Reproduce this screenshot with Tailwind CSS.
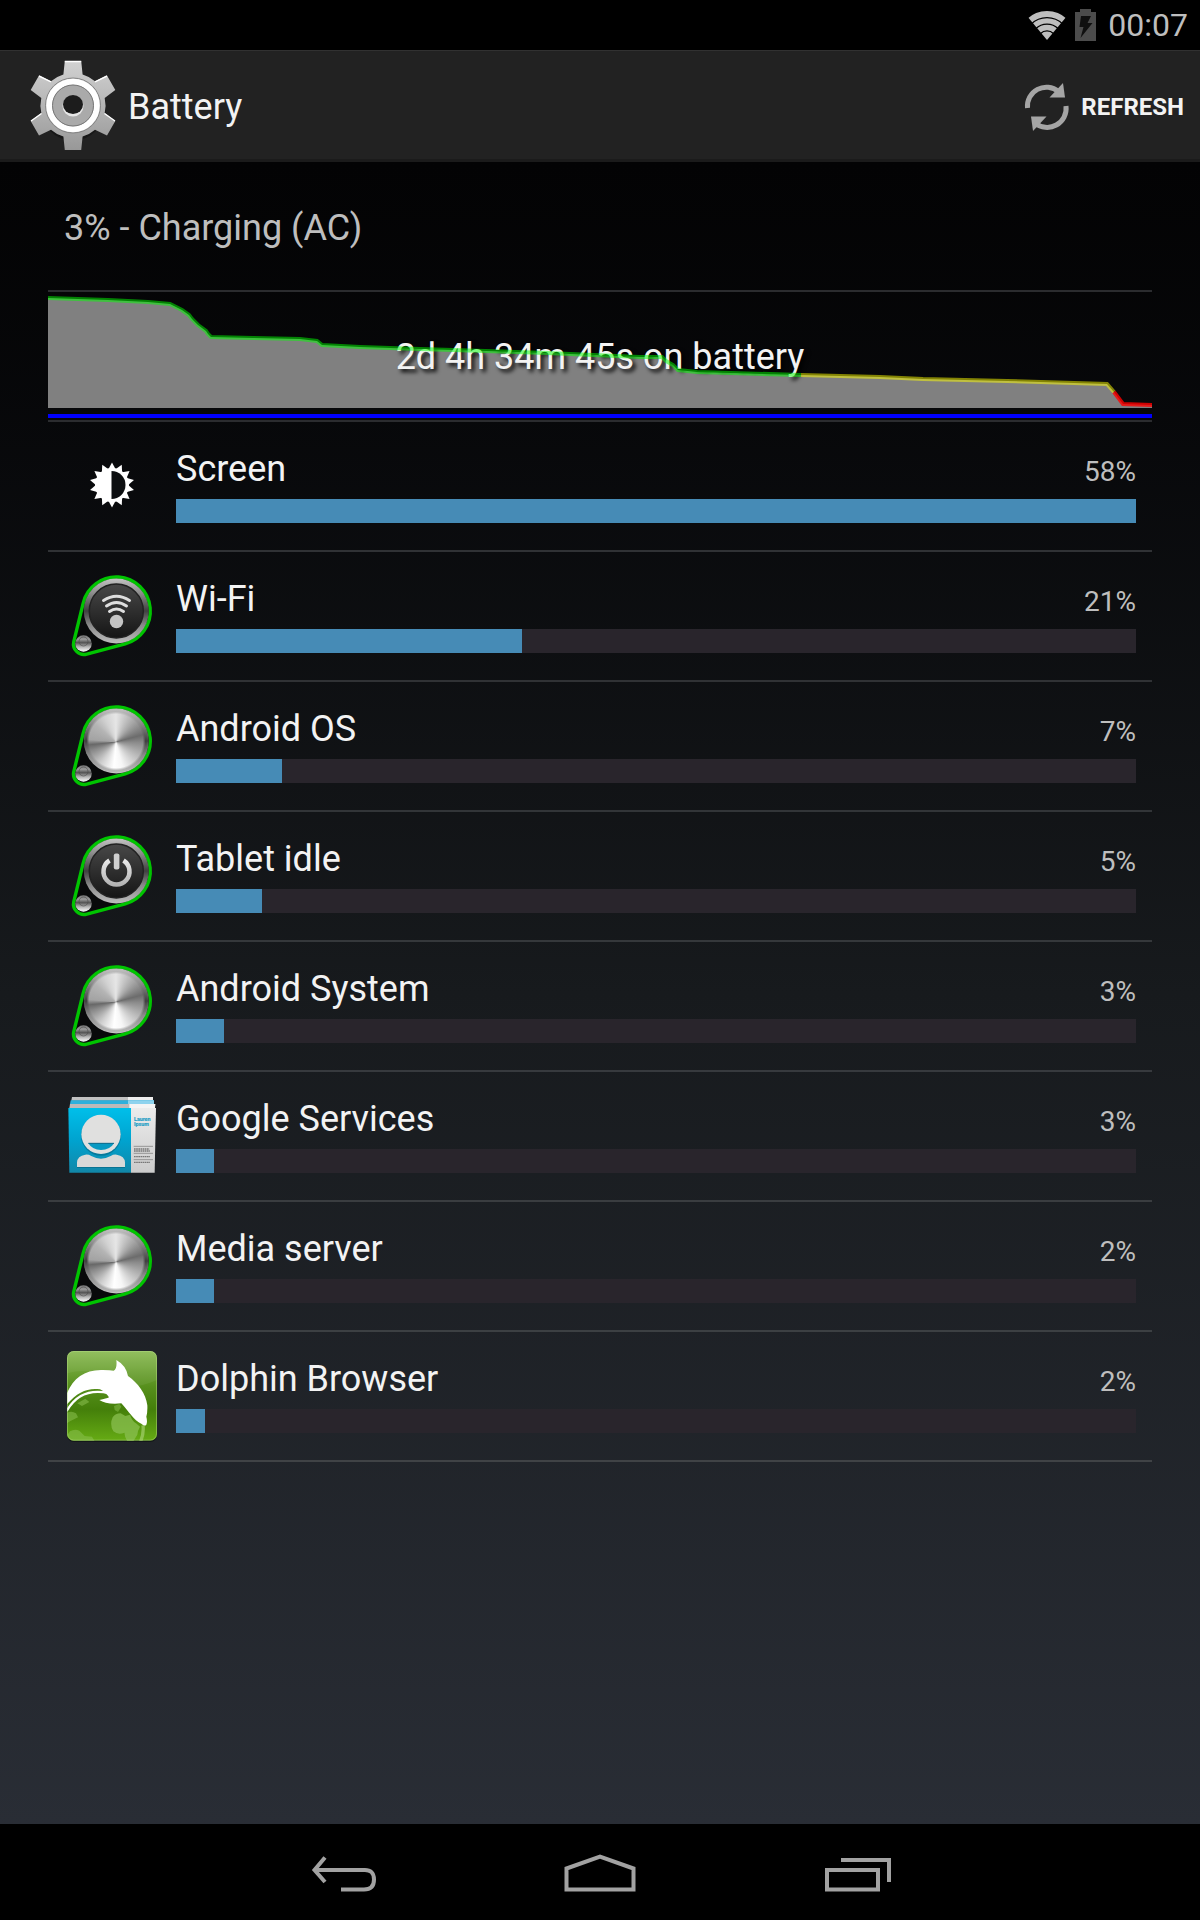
<!DOCTYPE html>
<html lang="en">
<head>
<meta charset="utf-8">
<meta name="viewport" content="width=device-width, initial-scale=1">
<title>Battery</title>
<script src="https://cdn.jsdelivr.net/npm/@tailwindcss/browser@4"></script>
</head>
<body class="flex min-h-screen flex-col bg-black font-[Roboto,sans-serif] text-[#f3f3f3]">

<!-- Shared icon parts -->
<svg class="absolute size-0" aria-hidden="true">
  <defs>
    <linearGradient id="rim" x1="0" y1="0" x2="0" y2="1">
      <stop offset="0" stop-color="#c4c4c4"/><stop offset=".22" stop-color="#8e8e8e"/><stop offset=".5" stop-color="#404040"/><stop offset=".72" stop-color="#8a8a8a"/><stop offset="1" stop-color="#bdbdbd"/>
    </linearGradient>
    <linearGradient id="face" x1="0" y1="0" x2="0" y2="1">
      <stop offset="0" stop-color="#484848"/><stop offset="1" stop-color="#151515"/>
    </linearGradient>
    <linearGradient id="ball" x1="0" y1="0" x2="0" y2="1">
      <stop offset="0" stop-color="#777"/><stop offset=".25" stop-color="#999"/><stop offset=".45" stop-color="#555"/><stop offset=".7" stop-color="#b5b5b5"/><stop offset="1" stop-color="#fff"/>
    </linearGradient>
    <linearGradient id="glyph" x1="0" y1="0" x2="0" y2="1">
      <stop offset="0" stop-color="#e8e8e8"/><stop offset="1" stop-color="#b4b4b4"/>
    </linearGradient>
    <linearGradient id="gearFill" x1="0" y1="0" x2="0" y2="1">
      <stop offset="0" stop-color="#d2d2d2"/><stop offset="1" stop-color="#989898"/>
    </linearGradient>
    <linearGradient id="card" x1="0" y1="0" x2="0" y2="1">
      <stop offset="0" stop-color="#00bfea"/><stop offset=".5" stop-color="#00a3cf"/><stop offset="1" stop-color="#1287a8"/>
    </linearGradient>
    <linearGradient id="paper" x1="0" y1="0" x2="0" y2="1">
      <stop offset="0" stop-color="#ececec"/><stop offset="1" stop-color="#cbcbcb"/>
    </linearGradient>
    <linearGradient id="leaf" x1="0" y1="0" x2="0" y2="1">
      <stop offset="0" stop-color="#8cbb55"/><stop offset=".4" stop-color="#568f1c"/><stop offset=".65" stop-color="#447f0a"/><stop offset="1" stop-color="#66ab14"/>
    </linearGradient>
    <symbol id="pod" viewBox="0 0 96 96">
      <path d="M19.200 35.100A34 34 0 1 1 61.200 75.800L22.800 86.100A10.500 10.500 0 0 1 9.800 73.600Z" fill="#08090a" stroke="#00c400" stroke-width="3.400"/>
      <circle cx="52.300" cy="43" r="32.500" fill="url(#rim)"/>
      <circle cx="19.500" cy="75.500" r="8.300" fill="url(#ball)"/>
      <circle cx="19.500" cy="73.500" r="4.500" fill="none" stroke="#4a4a4a" stroke-opacity=".6"/>
    </symbol>
  </defs>
</svg>

<header>
  <div class="flex h-[50px] items-center justify-end bg-black pr-3 text-[#bebebe]">
    <svg class="mr-2 h-8 w-10" viewBox="0 0 40 32" aria-label="Wi-Fi signal" role="img">
      <defs><clipPath id="fan"><path d="M20 31L0 7V0H40V7Z"/></clipPath></defs>
      <g clip-path="url(#fan)" fill="none" stroke="#bebebe">
        <circle cx="20" cy="31" r="26" stroke-width="6"/>
        <circle cx="20" cy="31" r="19.200" stroke-width="5.200"/>
        <circle cx="20" cy="31" r="12.500" stroke-width="5.500"/>
        <circle cx="20" cy="31" r="4.200" stroke-width="8.400"/>
      </g>
    </svg>
    <svg class="mr-3 h-8 w-[21px]" viewBox="0 0 21 32" aria-label="Charging" role="img">
      <path d="M5 0H16V3H21V32H0V3H5Z" fill="#4c4c4c"/>
      <path d="M6 7H16L12.500 14H17.500L5.500 29L8.500 18H4.500Z" fill="#101010"/>
    </svg>
    <time class="text-[32px] leading-9">00:07</time>
  </div>
  <div class="flex h-28 items-center border-t border-b-3 border-t-[#313131] border-b-[#1b1b1b] bg-[#222] pt-1 pr-4 pl-6">
    <svg class="mr-2 size-24" viewBox="0 1 96 96" aria-hidden="true">
      <circle cx="49" cy="49.500" r="33" fill="#0b0b0b" opacity=".45"/>
      <path d="M40.800 3H57.200L58.600 16.500A32.500 32.500 0 0 1 71 23.300L83 17.500L91.300 32L80.700 40A32.500 32.500 0 0 1 80.700 55L91.300 63L83 77.500L71 71.700A32.500 32.500 0 0 1 58.600 78.500L57.200 92H40.800L39.400 78.500A32.500 32.500 0 0 1 27 71.700L15 77.500L6.700 63L17.300 55A32.500 32.500 0 0 1 17.300 40L6.700 32L15 17.500L27 23.300A32.500 32.500 0 0 1 39.400 16.500Z" fill="url(#gearFill)"/>
      <path d="M40.800 3.500H57.200M15 18L27 23.800M83 18L71 23.800M7 63L17.500 55.500M91 63L80.500 55.500" fill="none" stroke="#fff" stroke-width="1.400"/>
      <circle cx="49" cy="47.500" r="27.500" fill="none" stroke="#858585" stroke-width="1"/>
      <circle cx="49" cy="47.500" r="23.800" fill="#aaa" stroke="#fff" stroke-width="6"/>
      <circle cx="49" cy="47.500" r="20.500" fill="none" stroke="#777" stroke-width="1"/>
      <circle cx="49" cy="48" r="10.500" fill="#e6e6e6"/>
      <ellipse cx="49" cy="46.500" rx="10" ry="9.500" fill="#1c1c1c"/>
    </svg>
    <h1 class="text-4xl leading-10">Battery</h1>
    <button type="button" class="ml-auto flex items-center gap-2.5 text-2xl font-bold uppercase">
      <svg class="h-12 w-12" viewBox="0 0 48 48" fill="none" aria-hidden="true">
        <g stroke="#a5a5a5" stroke-width="5">
          <path d="M4.500 25A19 19 0 0 1 35.500 8.500"/>
          <path d="M43 23A19 19 0 0 1 12 40"/>
        </g>
        <path d="M40 0L42 14.500H26.500Z" fill="#a5a5a5"/>
        <path d="M10 48L8 33.500H23.500Z" fill="#a5a5a5"/>
      </svg>
      <span>Refresh</span>
    </button>
  </div>
</header>

<main class="flex-1 bg-linear-to-b from-[#030304] via-[#171a1d] via-50% to-[#292d35] px-12">
  <p class="flex h-32 items-center px-4 pt-1 text-4xl leading-10 text-[#bebebe]">3% - Charging (AC)</p>

  <section class="grid h-[130px] items-center border-t-2 border-[#2b2c2f]" aria-label="Battery history">
    <svg class="col-start-1 row-start-1 h-32 w-full" viewBox="0 0 1104 128" preserveAspectRatio="none" aria-hidden="true">
      <path fill="#808080" d="M0 6L60 8L100 10L122 12L134 18L141 23L144 27L150 33L158 39L160 42L163 45L205 46L252 47L269 49L274 53L312 55L372 57L499 61L592 65L614 65L618 69L625 73L630 78L649 80L753 83L832 85L875 87L959 89L1059 92L1066 100L1075 112L1104 113V116H0Z"/>
      <path fill="#00f" d="M0 122H1104V126H0Z"/>
    </svg>
    <p class="col-start-1 row-start-1 pt-0.5 text-center text-4xl leading-10 [text-shadow:3px_3px_4px_#000]">2d 4h 34m 45s on battery</p>
    <svg class="relative col-start-1 row-start-1 h-32 w-full" viewBox="0 0 1104 128" preserveAspectRatio="none" fill="none" stroke-width="4" aria-hidden="true">
      <path stroke="#00ff00" stroke-opacity=".5" d="M0 6L60 8L100 10L122 12L134 18L141 23L144 27L150 33L158 39L160 42L163 45L205 46L252 47L269 49L274 53L312 55L372 57L499 61L592 65L614 65L618 69L625 73L630 78L649 80L753 83"/>
      <path stroke="#ffff00" stroke-opacity=".5" d="M753 83L832 85L875 87L959 89L1059 92L1066 100"/>
      <path stroke="#ff0000" stroke-opacity=".8" d="M1066 100L1075 112L1104 113"/>
    </svg>
  </section>

  <ul class="border-t-2 border-[#2b2c2f]">
    <li class="flex h-[130px] items-center border-b-2 border-[#303235] px-4">
      <svg class="mr-4 size-24 shrink-0" viewBox="0 0 96 96" fill="#fff" aria-hidden="true">
        <defs><path id="ray" d="M48 24.500L52.300 32.500H43.700Z"/></defs>
        <use href="#ray"/><use href="#ray" transform="rotate(25.714 48 47)"/><use href="#ray" transform="rotate(51.429 48 47)"/><use href="#ray" transform="rotate(77.143 48 47)"/><use href="#ray" transform="rotate(102.857 48 47)"/><use href="#ray" transform="rotate(128.571 48 47)"/><use href="#ray" transform="rotate(154.286 48 47)"/><use href="#ray" transform="rotate(180 48 47)"/><use href="#ray" transform="rotate(205.714 48 47)"/><use href="#ray" transform="rotate(231.429 48 47)"/><use href="#ray" transform="rotate(257.143 48 47)"/><use href="#ray" transform="rotate(282.857 48 47)"/><use href="#ray" transform="rotate(308.571 48 47)"/><use href="#ray" transform="rotate(334.286 48 47)"/>
        <circle cx="48" cy="47" r="17"/>
        <path d="M47.500 33A14 14 0 0 1 47.500 61Z" fill="#0c0e10"/>
      </svg>
      <div class="flex-1 pt-0.5">
        <div class="flex items-baseline justify-between pb-3">
          <span class="text-4xl leading-9">Screen</span><span class="text-[28px] leading-7 text-[#bebebe]">58%</span>
        </div>
        <div class="h-6 bg-[#29252c]"><div class="h-full bg-[#468bb6]" style="width:100%"></div></div>
      </div>
    </li>
    <li class="flex h-[130px] items-center border-b-2 border-[#303235] px-4">
      <svg class="mr-4 size-24 shrink-0" viewBox="0 0 96 96" aria-hidden="true">
        <use href="#pod"/>
        <circle cx="52.300" cy="43" r="27" fill="url(#face)" stroke="#222" stroke-width="1.500"/>
        <g fill="none" stroke="#dedede" stroke-width="3" stroke-linecap="round">
          <path d="M39.500 32.500Q52.500 24 65.500 32.500"/><path d="M42.500 38Q52.500 31 62.500 38"/><path d="M45.500 43.500Q52.500 38.500 59.500 43.500"/>
        </g>
        <circle cx="52.500" cy="53.500" r="6.700" fill="#c4c4c4"/>
      </svg>
      <div class="flex-1 pt-0.5">
        <div class="flex items-baseline justify-between pb-3">
          <span class="text-4xl leading-9">Wi-Fi</span><span class="text-[28px] leading-7 text-[#bebebe]">21%</span>
        </div>
        <div class="h-6 bg-[#29252c]"><div class="h-full bg-[#468bb6]" style="width:36%"></div></div>
      </div>
    </li>
    <li class="flex h-[130px] items-center border-b-2 border-[#323538] px-4">
      <div class="relative mr-4 size-24 shrink-0" aria-hidden="true">
        <svg class="size-24" viewBox="0 0 96 96"><use href="#pod"/></svg>
        <div class="absolute top-[11px] left-5 size-16 rounded-full border-t-2 border-[#777]/60 bg-[conic-gradient(#e6e6e6_0deg,#a8a8a8_40deg,#6c6c6c_75deg,#8c8c8c_92deg,#bdbdbd_125deg,#f6f6f6_165deg,#ffffff_185deg,#d0d0d0_215deg,#8a8a8a_250deg,#686868_264deg,#a3a3a3_275deg,#b4b4b4_310deg,#d2d2d2_335deg,#e6e6e6_360deg)] mask-radial-from-84% mask-radial-to-92% mask-radial-closest-side"></div>
      </div>
      <div class="flex-1 pt-0.5">
        <div class="flex items-baseline justify-between pb-3">
          <span class="text-4xl leading-9">Android OS</span><span class="text-[28px] leading-7 text-[#bebebe]">7%</span>
        </div>
        <div class="h-6 bg-[#29252c]"><div class="h-full bg-[#468bb6]" style="width:11%"></div></div>
      </div>
    </li>
    <li class="flex h-[130px] items-center border-b-2 border-[#35383b] px-4">
      <svg class="mr-4 size-24 shrink-0" viewBox="0 0 96 96" aria-hidden="true">
        <use href="#pod"/>
        <circle cx="52.300" cy="43" r="27" fill="url(#face)" stroke="#222" stroke-width="1.500"/>
        <path d="M45.500 32.500A13 13 0 1 0 59.500 32.500" fill="none" stroke="url(#glyph)" stroke-width="4.500"/>
        <rect x="49.800" y="25.500" width="5.600" height="16" rx="2" fill="#cfcfcf"/>
      </svg>
      <div class="flex-1 pt-0.5">
        <div class="flex items-baseline justify-between pb-3">
          <span class="text-4xl leading-9">Tablet idle</span><span class="text-[28px] leading-7 text-[#bebebe]">5%</span>
        </div>
        <div class="h-6 bg-[#29252c]"><div class="h-full bg-[#468bb6]" style="width:9%"></div></div>
      </div>
    </li>
    <li class="flex h-[130px] items-center border-b-2 border-[#373a3e] px-4">
      <div class="relative mr-4 size-24 shrink-0" aria-hidden="true">
        <svg class="size-24" viewBox="0 0 96 96"><use href="#pod"/></svg>
        <div class="absolute top-[11px] left-5 size-16 rounded-full border-t-2 border-[#777]/60 bg-[conic-gradient(#e6e6e6_0deg,#a8a8a8_40deg,#6c6c6c_75deg,#8c8c8c_92deg,#bdbdbd_125deg,#f6f6f6_165deg,#ffffff_185deg,#d0d0d0_215deg,#8a8a8a_250deg,#686868_264deg,#a3a3a3_275deg,#b4b4b4_310deg,#d2d2d2_335deg,#e6e6e6_360deg)] mask-radial-from-84% mask-radial-to-92% mask-radial-closest-side"></div>
      </div>
      <div class="flex-1 pt-0.5">
        <div class="flex items-baseline justify-between pb-3">
          <span class="text-4xl leading-9">Android System</span><span class="text-[28px] leading-7 text-[#bebebe]">3%</span>
        </div>
        <div class="h-6 bg-[#29252c]"><div class="h-full bg-[#468bb6]" style="width:5%"></div></div>
      </div>
    </li>
    <li class="flex h-[130px] items-center border-b-2 border-[#3a3d40] px-4">
      <svg class="mr-4 size-24 shrink-0" viewBox="42 24 288 288" aria-hidden="true">
        <path d="M66 51H309V62H64Z" fill="#c2c2c2"/><path d="M234 51H309V62H234Z" fill="#eee"/>
        <path d="M62 61H312V72H60Z" fill="#2fb0dc"/><path d="M234 61H312V72H234Z" fill="#8fd3ee"/>
        <path d="M60 72H316L314 84H58Z" fill="#bdb9b9"/><path d="M238 72H316L315 84H238Z" fill="#f4f4f4"/>
        <path d="M55 84H243V278H58Z" fill="url(#card)"/>
        <path d="M243 84H318L314 278H243Z" fill="url(#paper)"/>
        <path d="M81 261V247Q82 228 106 224Q116 223 124 228Q153 244 182 228Q190 223 200 224Q224 228 225 247V261Z" fill="#045b78" opacity=".5" transform="translate(0 3)"/>
        <circle cx="153" cy="167" r="60" fill="#045b78" opacity=".5"/>
        <circle cx="153" cy="163" r="59" fill="#e0e0df"/>
        <path d="M115 190H192Q180 210 153 210Q127 210 115 190Z" fill="#0799c2"/>
        <path d="M115 190H192" stroke="#07688a" stroke-width="3"/>
        <path d="M81 261V247Q82 228 106 224Q116 223 124 228Q153 244 182 228Q190 223 200 224Q224 228 225 247V261Z" fill="#d9d9d8"/>
        <g fill="#27a0c6" stroke="#27a0c6" stroke-width=".5" font-family="Roboto" font-size="16" font-weight="bold"><text x="252" y="122">Lauren</text><text x="252" y="138">Ipsum</text></g>
        <path d="M251 199H309M251 220H309M251 239H309" stroke="#888" stroke-width="2.500"/>
        <path d="M252 207H298M252 213H300M252 230H300M252 247H300" stroke="#777" stroke-width="4" stroke-dasharray="5 1.500"/>
      </svg>
      <div class="flex-1 pt-0.5">
        <div class="flex items-baseline justify-between pb-3">
          <span class="text-4xl leading-9">Google Services</span><span class="text-[28px] leading-7 text-[#bebebe]">3%</span>
        </div>
        <div class="h-6 bg-[#29252c]"><div class="h-full bg-[#468bb6]" style="width:4%"></div></div>
      </div>
    </li>
    <li class="flex h-[130px] items-center border-b-2 border-[#3c4043] px-4">
      <div class="relative mr-4 size-24 shrink-0" aria-hidden="true">
        <svg class="size-24" viewBox="0 0 96 96"><use href="#pod"/></svg>
        <div class="absolute top-[11px] left-5 size-16 rounded-full border-t-2 border-[#777]/60 bg-[conic-gradient(#e6e6e6_0deg,#a8a8a8_40deg,#6c6c6c_75deg,#8c8c8c_92deg,#bdbdbd_125deg,#f6f6f6_165deg,#ffffff_185deg,#d0d0d0_215deg,#8a8a8a_250deg,#686868_264deg,#a3a3a3_275deg,#b4b4b4_310deg,#d2d2d2_335deg,#e6e6e6_360deg)] mask-radial-from-84% mask-radial-to-92% mask-radial-closest-side"></div>
      </div>
      <div class="flex-1 pt-0.5">
        <div class="flex items-baseline justify-between pb-3">
          <span class="text-4xl leading-9">Media server</span><span class="text-[28px] leading-7 text-[#bebebe]">2%</span>
        </div>
        <div class="h-6 bg-[#29252c]"><div class="h-full bg-[#468bb6]" style="width:4%"></div></div>
      </div>
    </li>
    <li class="flex h-[130px] items-center border-b-2 border-[#404346] px-4">
      <svg class="mr-4 size-24 shrink-0" viewBox="42 54 288 288" aria-hidden="true">
        <defs><clipPath id="tile"><rect x="51" y="63" width="270" height="269" rx="20"/></clipPath></defs>
        <rect x="51" y="67" width="270" height="269" rx="20" fill="#0c0f11" opacity=".6"/>
        <g clip-path="url(#tile)">
          <rect x="51" y="63" width="270" height="269" fill="url(#leaf)"/>
          <path d="M51 63H321V150Q230 190 180 150T51 130Z" fill="#fff" opacity=".06"/>
          <path d="M188 262Q196 250 212 250L226 258L240 254Q246 272 258 280L270 290Q262 304 262 314L250 334H232Q222 318 224 308Q204 316 190 304Q178 284 188 262Z" fill="#8abf50" opacity=".75"/>
          <path d="M192 228L208 222L214 230L204 246L194 240Z" fill="#7fb545" opacity=".6"/>
          <path d="M51 248Q66 242 78 250L84 262L60 274L51 280ZM60 304Q74 296 88 302L104 318L126 320L134 334H66L51 316ZM82 220L106 206L118 216L96 228Z" fill="#8abf50" opacity=".55"/>
          <path d="M279 286Q282 310 272 334" fill="none" stroke="#a3cf6c" stroke-width="10" opacity=".7"/>
          <path d="M50 243Q92 170 178 190" fill="none" stroke="#fff" stroke-width="7"/>
          <path d="M45 206C62 150 100 118 158 120Q182 120 191 122Q202 116 199 90Q228 106 234 138C264 160 288 190 292 226Q293 246 289 260Q293 276 289 284Q284 290 275 282C250 270 236 244 214 220Q168 224 148 210Q170 206 177 202Q164 184 150 178C112 172 78 188 45 230Z" fill="#fff"/>
        </g>
        <rect x="52.500" y="64.500" width="267" height="266" rx="19" fill="none" stroke="#b7dd87" stroke-width="3" opacity=".45"/>
      </svg>
      <div class="flex-1 pt-0.5">
        <div class="flex items-baseline justify-between pb-3">
          <span class="text-4xl leading-9">Dolphin Browser</span><span class="text-[28px] leading-7 text-[#bebebe]">2%</span>
        </div>
        <div class="h-6 bg-[#29252c]"><div class="h-full bg-[#468bb6]" style="width:3%"></div></div>
      </div>
    </li>
  </ul>
</main>

<nav class="flex h-24 items-center justify-center bg-black" aria-label="System">
  <button type="button" class="flex h-24 w-64 items-center justify-center" aria-label="Back">
    <svg class="h-12 w-20" viewBox="0 0 80 48" fill="none" stroke="#a2a2a2" stroke-width="4">
      <path d="M37 41.500H60Q70 41.500 70 31.500T60 22H12"/><path d="M21 9.500L10.500 22L21 34"/>
    </svg>
  </button>
  <button type="button" class="flex h-24 w-64 items-center justify-center" aria-label="Home">
    <svg class="h-12 w-20" viewBox="0 0 80 48" fill="none" stroke="#a2a2a2" stroke-width="4">
      <path d="M6.500 41.500V20.500L40 8.500L73.500 20.500V41.500Z"/>
    </svg>
  </button>
  <button type="button" class="flex h-24 w-64 items-center justify-center" aria-label="Recent apps">
    <svg class="h-12 w-20" viewBox="0 0 80 48" fill="none" stroke="#a2a2a2" stroke-width="4">
      <path d="M11 22H62V41.500H11Z"/><path d="M25 12H73V34"/>
    </svg>
  </button>
</nav>
</body>
</html>
